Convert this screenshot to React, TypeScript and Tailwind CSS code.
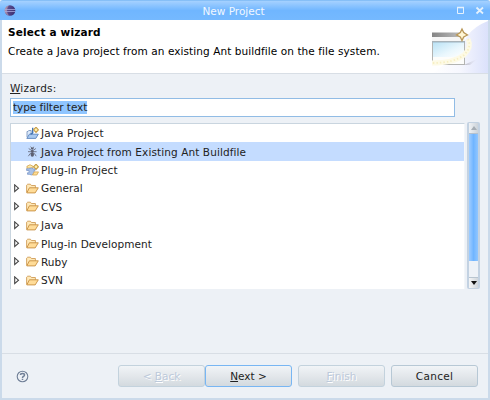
import React from "react";

function EclipseLogo() {
  return (
    <svg width="12" height="12" viewBox="0 0 12 12">
      <defs>
        <linearGradient id="globe" x1="0" x2="1" y2="0.3">
          <stop offset="0" stopColor="#a58aa9" />
          <stop offset="0.4" stopColor="#594b8d" />
          <stop offset="1" stopColor="#403477" />
        </linearGradient>
      </defs>
      <circle cx="6" cy="5.500" r="5.300" fill="url(#globe)" />
      <path d="M1.2 3.1Q3 .5 5 .2Q3 2.500 3 5.500T5 10.800Q1 9.500 .5 5.500" fill="#c5a6b8" opacity=".6" />
      <path d="M.9 4.500h10.400M.8 6.500h10.400" stroke="#a9a9dc" strokeWidth=".8" />
    </svg>
  );
}

function WizardBanner() {
  return (
    <svg width="58" height="53" viewBox="8 0 58 53">
      <defs>
        <linearGradient id="wash" x1="0" x2="1">
          <stop offset="0" stopColor="#fff" />
          <stop offset="0.5" stopColor="#f6f7fe" />
          <stop offset="1" stopColor="#dbe1fb" />
        </linearGradient>
        <linearGradient id="titlebar" x1="0" x2="1">
          <stop offset="0" stopColor="#858585" />
          <stop offset="1" stopColor="#c4c4c4" />
        </linearGradient>
        <linearGradient id="pane" x1="0" x2="1" y2="1">
          <stop offset="0" stopColor="#b9e2f5" />
          <stop offset="0.6" stopColor="#eaf7fd" />
          <stop offset="1" stopColor="#fff" />
        </linearGradient>
        <linearGradient id="shadow" x1="0" x2="1">
          <stop offset="0" stopColor="#b4b4c0" />
          <stop offset="1" stopColor="#e8eafa" stopOpacity="0" />
        </linearGradient>
      </defs>
      <path d="M66 1Q53 6 46 15Q32 40 10 53H66Z" fill="url(#wash)" />
      <path d="M42 45L57 38L48 45Z" fill="url(#shadow)" />
      <rect x="10" y="12.500" width="33" height="32.500" fill="#fff" />
      <rect x="10" y="12.500" width="33" height="4.500" fill="url(#titlebar)" />
      <rect x="10" y="17" width="33" height="4.500" fill="#f6f6f6" />
      <rect x="10.500" y="21.500" width="32" height="23" fill="#fdfdfb" stroke="#b3b4b2" />
      <rect x="11" y="22" width="31" height="15" fill="url(#pane)" />
      <path d="M10 22h33" stroke="#9db3c1" />
      <path d="M46 19Q50 27 42 35Q32 43 10 43" fill="none" stroke="#fdfae6" strokeWidth="5" />
      <path d="M46 19Q50 27 42 35Q32 43 10 43" fill="none" stroke="#f7efc4" strokeWidth="1.800" strokeDasharray="1.500 2" />
      <path d="M40 9l1.700 3.500 3.800 2.500-3.800 2-1.700 3.500-1.700-3.500-3.800-2 3.800-2.500z" fill="#fff6d4" stroke="#b99757" strokeWidth="1.300" />
    </svg>
  );
}

function JavaProjectIcon() {
  return (
    <svg width="13" height="12" viewBox="0 0 13 12">
      <path d="M1 10V4.500h1l.7-1h2.500V8" fill="#dceafb" stroke="#7b96c0" strokeWidth=".9" />
      <path d="M.8 11.400L3.400 7.200H12.300L9.800 11.400Z" fill="#a9c9f0" stroke="#5b85be" strokeWidth=".9" />
      <path d="M6.700 .8V5.800Q6.300 7.200 4.500 6.600" fill="none" stroke="#4576b4" strokeWidth="1.400" />
      <path d="M10 .2L12.400 2.800L10 5.400L7.600 2.800Z" fill="#fff0ae" stroke="#c69b45" strokeWidth="1.100" />
    </svg>
  );
}

function AntIcon() {
  return (
    <svg width="13" height="12" viewBox="0 0 13 12">
      <g fill="none" stroke="#6b6e80" strokeWidth=".9">
        <path d="M4.500 .8L6.300 2.400L8.100 .8M2.700 2.500L6.300 5L9.900 2.500M2 5.700H10.600M2.400 10.200L4.200 7.500L6.300 6.500L8.400 7.500L10.200 10.200" />
      </g>
      <ellipse cx="6.300" cy="2.600" rx="1.400" ry="1.100" fill="#5c5f70" />
      <ellipse cx="6.300" cy="5.300" rx="1.200" ry="1.400" fill="#5c5f70" />
      <ellipse cx="6.300" cy="8.700" rx="1.700" ry="2.100" fill="#5c5f70" />
    </svg>
  );
}

function PluginIcon() {
  return (
    <svg width="13" height="12" viewBox="0 0 13 12">
      <path d="M1 5V2H2L3 1H5L6 2H7V4H1" fill="#fce9ae" stroke="#d8ad5b" strokeWidth=".9" />
      <path d="M10 .2L12.400 2.800L10 5.400L7.600 2.800Z" fill="#fff0ae" stroke="#c69b45" strokeWidth="1.100" />
      <path d="M.6 4.800H3Q5.500 3 7.800 5H9V6.600H8V8.400H9V10H8Q5.800 11.700 3.200 10.300H1.500V8.800H3V6.500H.6Z" fill="#a8c1e6" stroke="#7f9bcb" strokeWidth=".8" />
      <path d="M6.500 11L8.200 7.900H12.500L10.800 11Z" fill="#ffdd91" stroke="#d3a553" strokeWidth=".8" />
    </svg>
  );
}

function FolderIcon() {
  return (
    <svg width="13" height="11" viewBox="0 0 13 11">
      <path d="M.6 9.500V2.200L1.700 1.200H4.400L5.400 2.500H9.400V5" fill="#ffe9b8" stroke="#d09d57" strokeWidth=".9" />
      <path d="M.8 9.900L3.400 4.800H12.300L9.200 9.900Z" fill="#ffdc98" stroke="#c78e42" strokeWidth=".9" />
    </svg>
  );
}

type Entry = { name: string; icon: () => React.JSX.Element; folder?: boolean; selected?: boolean };

const entries: Entry[] = [
  { name: "Java Project", icon: JavaProjectIcon },
  { name: "Java Project from Existing Ant Buildfile", icon: AntIcon, selected: true },
  { name: "Plug-in Project", icon: PluginIcon },
  { name: "General", icon: FolderIcon, folder: true },
  { name: "CVS", icon: FolderIcon, folder: true },
  { name: "Java", icon: FolderIcon, folder: true },
  { name: "Plug-in Development", icon: FolderIcon, folder: true },
  { name: "Ruby", icon: FolderIcon, folder: true },
  { name: "SVN", icon: FolderIcon, folder: true },
];

function WizardTree() {
  return (
    <div className="h-[166px] w-[455px] overflow-hidden border-t border-r border-l border-[#c9d5df] border-r-[#f3f6f9] bg-white">
      {entries.map(({ name, icon: Icon, folder, selected }) => (
        <div key={name} className={`flex h-[18.4px] items-center ${folder ? "tracking-[0.05px]" : "tracking-[0.1px]"} ${selected ? "bg-[#c4dcff]" : ""}`}>
          <span className="flex w-[15px] pl-[3px]">
            {folder && (
              <svg width="6" height="9" viewBox="0 0 6 9">
                <path d="M.7 .8L4.500 4.200L.7 7.600Z" fill="#fff" stroke="#444" strokeWidth="1.100" />
              </svg>
            )}
          </span>
          <Icon />
          <span className="ml-[2px]">{name}</span>
        </div>
      ))}
    </div>
  );
}

function ScrollBar() {
  return (
    <div className="-mt-px flex h-[167px] w-[13px] flex-col rounded-[2px] border-x-2 border-y border-[#c3d2e2] bg-[#eef2f7]">
      <div className="flex h-[11px] shrink-0 items-center justify-center border-b border-[#b5c1cd] bg-linear-to-r from-[#f0f2f4] to-[#ccd3da]">
        <svg width="6" height="4"><path d="M0 4L3 0L6 4Z" fill="#a6adb4" /></svg>
      </div>
      <div className="h-[127px] shrink-0 bg-linear-to-r from-[#a0cdff] via-[#70b5ff] to-[#90c6ff]" />
      <div className="grow" />
      <div className="flex h-[11px] shrink-0 items-center justify-center border-t border-[#b9c5d0] bg-linear-to-r from-[#f4f5f6] to-[#d0d6dc]">
        <svg width="6" height="4"><path d="M0 0H6L3 4Z" fill="#111" /></svg>
      </div>
    </div>
  );
}

const disabled = "border-[#c3d2dd] text-[#bcc9da] [text-shadow:1px_1px_0_#fff]";

function DialogButton({ className, children }: { className: string; children: React.ReactNode }) {
  return (
    <button className={`flex h-[22px] w-[87px] items-center justify-center rounded-[3px] border bg-linear-to-b from-[#f1f4f7] via-[#e3e7eb] to-[#d3dadf] ${className}`}>
      <span>{children}</span>
    </button>
  );
}

export default function App() {
  return (
    <div className="flex h-[400px] w-[490px] flex-col overflow-hidden bg-[#edf1f6] font-['DejaVu_Sans',sans-serif] text-[10.5px] leading-[14px] whitespace-nowrap text-[#222]">
      <header className="flex h-[20px] shrink-0 items-center rounded-t-[3px] border-t border-[#86bff7] bg-linear-to-b from-[#a5d1ff] via-[#70b6ff] to-[#75b9ff] pr-[5px] pl-[4px]">
        <EclipseLogo />
        <span className="grow pr-[6px] text-center text-[#f1f8ff]">New Project</span>
        <svg width="28" height="10" viewBox="0 0 28 10" fill="none" stroke="#e4f1fd">
          <path d="M.5 1.500H6.500V7.500H.5Z" />
          <path d="M0 1.500H7" strokeWidth="1.500" />
          <path d="M19.500 1.500L26 7.500M26 1.500L19.500 7.500" strokeWidth="1.800" />
        </svg>
      </header>

      <div className="flex grow flex-col border-x-2 border-b-2 border-[#cbdaea]">
        <section className="flex h-[54px] shrink-0 justify-between border-b border-[#d8dee5] bg-white pl-[6px] text-black">
          <div className="flex flex-col gap-[5px] pt-[5px]">
            <h1 className="font-bold tracking-[0.17px]">Select a wizard</h1>
            <p className="tracking-[0.08px]">Create a Java project from an existing Ant buildfile on the file system.</p>
          </div>
          <WizardBanner />
        </section>

        <main className="flex h-[280px] shrink-0 flex-col border-b border-[#d8dee5] pl-[8px]">
          <label className="mt-[7px] h-[14px] tracking-[0.2px]"><u>W</u>izards:</label>
          <div className="mt-[3px] flex h-[19px] w-[445px] items-center border border-[#91bce5] bg-white pl-[2px]">
            <span className="h-[13px] bg-[#8fc5ff] leading-[13px] tracking-[-0.06px] text-[#222]">type filter text</span>
          </div>
          <div className="mt-[6px] flex gap-[2px]">
            <WizardTree />
            <ScrollBar />
          </div>
        </main>

        <footer className="flex grow items-center pl-[14px]">
          <svg width="13" height="13" viewBox="0 0 13 13" fill="none" stroke="#718098">
            <circle cx="6.500" cy="6.500" r="5.300" strokeWidth="1.100" />
            <path d="M4.500 5Q4.500 3.400 6.500 3.400T8.500 5Q8.500 6 7.300 6.500Q6.500 7 6.500 8M6.500 8.700V10" strokeWidth="1.500" />
          </svg>
          <div className="ml-[89px] flex">
            <DialogButton className={disabled}>&lt; <u>B</u>ack</DialogButton>
            <DialogButton className="border-[#78b6f3]"><u>N</u>ext &gt;</DialogButton>
            <DialogButton className={`ml-[6px] ${disabled}`}><u>F</u>inish</DialogButton>
            <DialogButton className="ml-[6px] border-[#b7c8d5] tracking-[0.3px]">Cancel</DialogButton>
          </div>
        </footer>
      </div>
    </div>
  );
}
